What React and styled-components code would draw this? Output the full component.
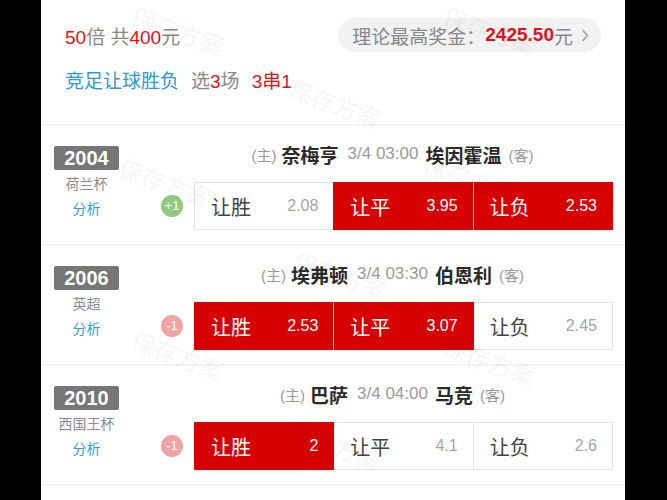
import React from 'react';
import styled, { createGlobalStyle } from 'styled-components';

const Global = createGlobalStyle`
  html, body {
    margin: 0;
    padding: 0;
    background: #000;
  }
  body {
    font-family: "Liberation Sans", "Noto Sans CJK SC", sans-serif;
  }
`;

const Page = styled.div`
  position: relative;
  width: 584px;
  min-height: 500px;
  margin-left: 41px;
  background: #fff;
  overflow: hidden;
`;

const Header = styled.div`
  padding: 18px 24px 0 24px;
  height: 126px;
  box-sizing: border-box;
  border-bottom: 2px solid #f3f3f3;
`;

const TopLine = styled.div`
  display: flex;
  align-items: center;
  justify-content: space-between;
  height: 34px;
`;

const Amount = styled.div`
  font-size: 19px;
  color: #888;
  white-space: nowrap;
`;

const Red = styled.span`
  color: #e0121b;
  font-weight: ${(p) => (p.$bold ? 700 : 400)};
`;

const Pill = styled.div`
  display: flex;
  align-items: center;
  height: 34px;
  padding: 0 12px 0 14px;
  border-radius: 17px;
  background: #f2f2f2;
  font-size: 19px;
  color: #888;
  white-space: nowrap;
`;

const Chevron = styled.svg`
  margin-left: 8px;
  width: 8px;
  height: 13px;
`;

const PlayLine = styled.div`
  margin-top: 18px;
  font-size: 19px;
  line-height: 24px;
  color: #888;
  white-space: nowrap;
`;

const Blue = styled.span`
  color: #2f97d6;
  margin-right: 12px;
`;

const Gap = styled.span`
  margin-right: 12px;
`;

const Row = styled.div`
  display: flex;
  height: 118px;
  border-bottom: 2px solid #f3f3f3;
`;

const LeftCol = styled.div`
  width: 91px;
  display: flex;
  flex-direction: column;
  align-items: center;
  padding-top: 20px;
`;

const YearBadge = styled.div`
  width: 65px;
  height: 24px;
  line-height: 24px;
  text-align: center;
  background: #767676;
  border-radius: 2px;
  color: #fff;
  font-size: 20px;
  font-weight: 700;
`;

const League = styled.div`
  margin-top: 5px;
  font-size: 14px;
  line-height: 18px;
  color: #8a8a8a;
`;

const Analysis = styled.div`
  margin-top: 7px;
  font-size: 14px;
  line-height: 18px;
  color: #3a9ad9;
`;

const RightCol = styled.div`
  flex: 1;
  padding: 18px 12px 0 0;
`;

const Title = styled.div`
  padding-left: 40px;
  height: 20px;
  display: flex;
  align-items: center;
  justify-content: center;
  white-space: nowrap;
`;

const Side = styled.span`
  font-size: 15px;
  color: #999;
`;

const Team = styled.span`
  font-size: 19px;
  font-weight: 700;
  color: #2a2a2a;
  margin: 0 7px 0 5px;
`;

const Time = styled.span`
  font-size: 17px;
  color: #9a9a9a;
  margin: 0 2px;
`;

const OddsLine = styled.div`
  margin-top: 18px;
  display: flex;
  align-items: center;
`;

const Handicap = styled.div`
  width: 22px;
  height: 22px;
  margin: 0 11px 0 29px;
  border-radius: 50%;
  background: ${(p) => (p.$plus ? '#8fca7e' : '#f1a3a3')};
  color: #fff;
  font-size: 13px;
  line-height: 22px;
  text-align: center;
  flex-shrink: 0;
`;

const OddsBox = styled.div`
  flex: 1;
  display: flex;
  height: 48px;
`;

const Cell = styled.div`
  flex: 1;
  display: flex;
  align-items: center;
  justify-content: space-between;
  padding: 0 15px 0 16px;
  box-sizing: border-box;
  margin-left: -1px;
  border: 1px solid ${(p) => (p.$on ? '#d60000' : '#e3e3e3')};
  border-left-color: ${(p) =>
    p.$on ? (p.$afterOn ? '#f3c4c4' : '#d60000') : '#e3e3e3'};
  background: ${(p) => (p.$on ? '#d60000' : '#fff')};
  position: relative;
  z-index: ${(p) => (p.$on ? 1 : 0)};
  &:first-child {
    margin-left: 0;
  }
`;

const CellLabel = styled.span`
  font-size: 20px;
  color: ${(p) => (p.$on ? '#fff' : '#444')};
`;

const CellOdds = styled.span`
  font-size: 16px;
  color: ${(p) => (p.$on ? '#fff' : '#a5a5a5')};
`;

const Watermark = styled.div`
  position: absolute;
  left: ${(p) => p.$x - 41}px;
  top: ${(p) => p.$y}px;
  transform: translate(-50%, -50%) rotate(20deg);
  font-size: 24px;
  font-weight: 700;
  color: rgba(0, 0, 0, 0.04);
  white-space: nowrap;
  pointer-events: none;
  z-index: 5;
`;

const matches = [
  {
    year: '2004',
    league: '荷兰杯',
    home: '奈梅亨',
    away: '埃因霍温',
    time: '3/4 03:00',
    handicap: '+1',
    odds: [
      { label: '让胜', value: '2.08', on: false },
      { label: '让平', value: '3.95', on: true },
      { label: '让负', value: '2.53', on: true },
    ],
  },
  {
    year: '2006',
    league: '英超',
    home: '埃弗顿',
    away: '伯恩利',
    time: '3/4 03:30',
    handicap: '-1',
    odds: [
      { label: '让胜', value: '2.53', on: true },
      { label: '让平', value: '3.07', on: true },
      { label: '让负', value: '2.45', on: false },
    ],
  },
  {
    year: '2010',
    league: '西国王杯',
    home: '巴萨',
    away: '马竞',
    time: '3/4 04:00',
    handicap: '-1',
    odds: [
      { label: '让胜', value: '2', on: true },
      { label: '让平', value: '4.1', on: false },
      { label: '让负', value: '2.6', on: false },
    ],
  },
];

const marks = [
  [178, 30], [490, 30], [335, 103], [165, 182], [470, 178],
  [340, 275], [178, 355], [490, 360], [335, 445],
];

const App = () => {
  return (
    <>
      <Global />
      <Page>
        <Header>
          <TopLine>
            <Amount>
              <Red>50</Red>倍 共<Red>400</Red>元
            </Amount>
            <Pill>
              理论最高奖金：<Red $bold>2425.50</Red>元
              <Chevron viewBox="0 0 8 13">
                <path d="M1.5 1 L6.5 6.5 L1.5 12" fill="none" stroke="#999" strokeWidth="1.3" />
              </Chevron>
            </Pill>
          </TopLine>
          <PlayLine>
            <Blue>竞足让球胜负</Blue>
            <Gap>
              选<Red>3</Red>场
            </Gap>
            <Red>3串1</Red>
          </PlayLine>
        </Header>

        {matches.map((m) => (
          <Row key={m.year}>
            <LeftCol>
              <YearBadge>{m.year}</YearBadge>
              <League>{m.league}</League>
              <Analysis>分析</Analysis>
            </LeftCol>
            <RightCol>
              <Title>
                <Side>(主)</Side>
                <Team>{m.home}</Team>
                <Time>{m.time}</Time>
                <Team>{m.away}</Team>
                <Side>(客)</Side>
              </Title>
              <OddsLine>
                <Handicap $plus={m.handicap.startsWith('+')}>{m.handicap}</Handicap>
                <OddsBox>
                  {m.odds.map((o, i) => (
                    <Cell key={o.label} $on={o.on} $afterOn={i > 0 && m.odds[i - 1].on}>
                      <CellLabel $on={o.on}>{o.label}</CellLabel>
                      <CellOdds $on={o.on}>{o.value}</CellOdds>
                    </Cell>
                  ))}
                </OddsBox>
              </OddsLine>
            </RightCol>
          </Row>
        ))}

        {marks.map(([x, y]) => (
          <Watermark key={`${x}-${y}`} $x={x} $y={y}>
            保存方案
          </Watermark>
        ))}
      </Page>
    </>
  );
};

export default App;
